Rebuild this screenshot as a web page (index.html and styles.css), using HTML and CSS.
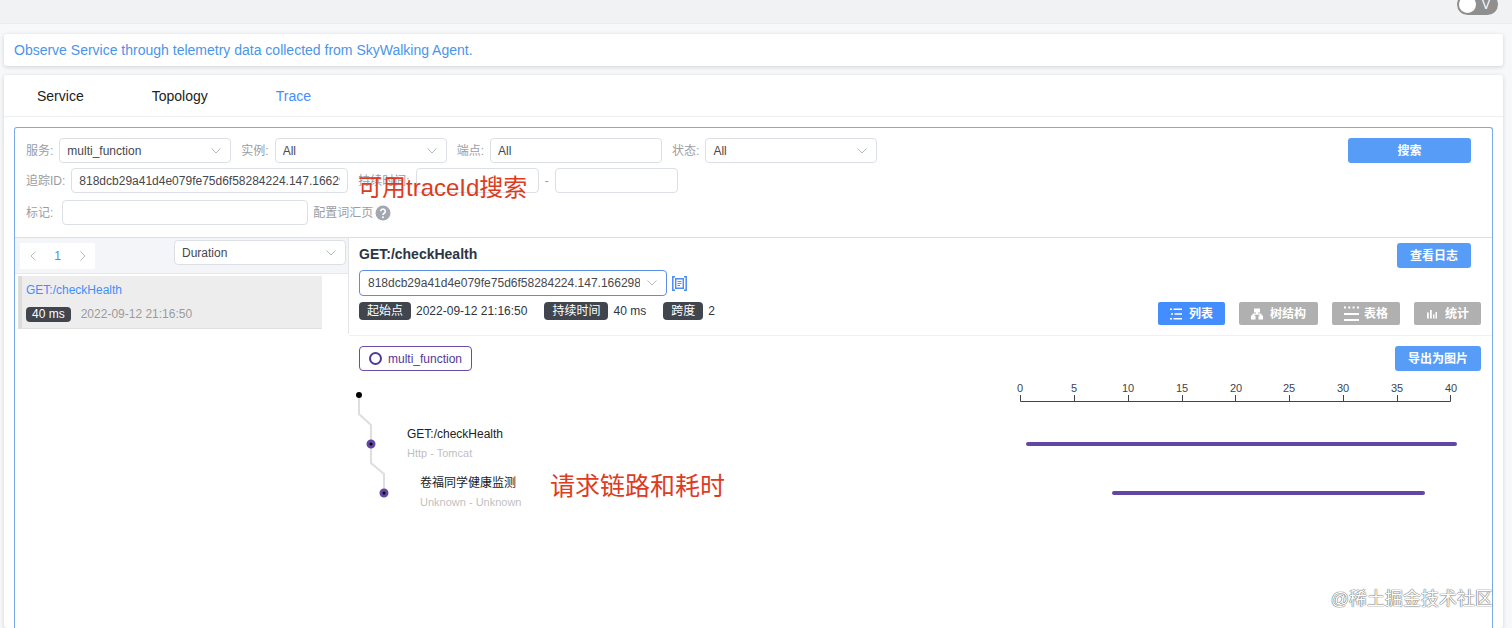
FILE: index.html
```html
<!DOCTYPE html>
<html lang="zh-CN">
<head>
    <meta charset="UTF-8">
    <meta name="viewport" content="width=device-width, initial-scale=1.0">
    <title>SkyWalking - Trace</title>
    <link rel="stylesheet" href="styles.css">
</head>
<body>
    <header class="topbar">
        <label class="switch">
            <input type="checkbox" aria-label="View mode">
            <span class="switch-text">V</span>
        </label>
    </header>

    <main class="page">
        <section class="card notice">
            <a href="#">Observe Service through telemetry data collected from SkyWalking Agent.</a>
        </section>

        <section class="card content">
            <nav class="tabs">
                <button type="button">Service</button>
                <button type="button">Topology</button>
                <button type="button" class="active">Trace</button>
            </nav>

            <div class="trace-panel">
                <form class="filters">
                    <div class="filter-row">
                        <div class="field">
                            <label for="service">服务:</label>
                            <select id="service" class="control medium"><option>multi_function</option></select>
                        </div>
                        <div class="field">
                            <label for="instance">实例:</label>
                            <select id="instance" class="control medium"><option>All</option></select>
                        </div>
                        <div class="field">
                            <label for="endpoint">端点:</label>
                            <input id="endpoint" class="control medium" type="text" value="All">
                        </div>
                        <div class="field">
                            <label for="status">状态:</label>
                            <select id="status" class="control medium"><option>All</option></select>
                        </div>
                        <button type="button" class="btn search">搜索</button>
                    </div>
                    <div class="filter-row">
                        <div class="field">
                            <label for="traceId">追踪ID:</label>
                            <input id="traceId" class="control trace-id" type="text" value="818dcb29a41d4e079fe75d6f58284224.147.16629886105550001">
                        </div>
                        <div class="field">
                            <label for="minTime">持续时间:</label>
                            <input id="minTime" class="control small" type="text">
                            <span class="dash">-</span>
                            <input class="control small" type="text" aria-label="最大持续时间">
                        </div>
                    </div>
                    <div class="filter-row tags-row">
                        <div class="field">
                            <label for="tags">标记:</label>
                            <input id="tags" class="control tags" type="text">
                        </div>
                        <a href="#" class="vocabulary">配置词汇页
                            <svg width="16" height="16" viewBox="0 0 16 16">
                                <circle cx="8" cy="8" r="7.5" fill="#a3a7b0"/>
                                <path d="M5.7 6.3a2.3 2.3 0 1 1 3.5 2c-.8.5-1.2.8-1.2 1.7" fill="none" stroke="#fff" stroke-width="1.6"/>
                                <circle cx="8" cy="12.2" r="1" fill="#fff"/>
                            </svg>
                        </a>
                    </div>
                    <p class="note note-search">可用traceId搜索</p>
                </form>

                <div class="trace-body">
                    <aside class="trace-list">
                        <div class="list-tools">
                            <div class="pager">
                                <button type="button" aria-label="Previous page">
                                    <svg width="8" height="12" viewBox="0 0 8 12"><path d="M6.5 1.5 2 6l4.500 4.500"/></svg>
                                </button>
                                <button type="button" class="current">1</button>
                                <button type="button" aria-label="Next page">
                                    <svg width="8" height="12" viewBox="0 0 8 12"><path d="M1.500 1.500 6 6l-4.500 4.500"/></svg>
                                </button>
                            </div>
                            <select class="control medium" aria-label="Order"><option>Duration</option></select>
                        </div>
                        <div class="trace-item">
                            <a href="#">GET:/checkHealth</a>
                            <div class="trace-meta">
                                <span class="tag">40 ms</span>
                                <span class="time">2022-09-12 21:16:50</span>
                            </div>
                        </div>
                    </aside>

                    <section class="trace-detail">
                        <div class="detail-head">
                            <div class="title-row">
                                <h2>GET:/checkHealth</h2>
                                <button type="button" class="btn">查看日志</button>
                            </div>
                            <div class="id-row">
                                <select class="control current-id" aria-label="Trace ID"><option>818dcb29a41d4e079fe75d6f58284224.147.16629886105550001</option></select>
                                <button type="button" class="copy" aria-label="Copy">
                                    <svg width="15" height="15" viewBox="0 0 15 15" fill="none" stroke="#4b8cf5">
                                        <path d="M3 .8H.8v13.400H3M12 .8h2.200v13.400H12" stroke-width="1.500"/>
                                        <path d="M3.700 2.700h7.600v9.600H3.700z" stroke-width="1.400"/>
                                        <path d="M5.500 5.500h4M5.500 7.500h4M5.500 9.500h2.500"/>
                                    </svg>
                                </button>
                            </div>
                            <div class="info-row">
                                <dl class="info">
                                    <div><dt class="tag">起始点</dt><dd>2022-09-12 21:16:50</dd></div>
                                    <div><dt class="tag">持续时间</dt><dd>40 ms</dd></div>
                                    <div><dt class="tag">跨度</dt><dd>2</dd></div>
                                </dl>
                                <div class="views">
                                    <button type="button" class="view active">
                                        <svg width="12" height="12" viewBox="0 0 12 12"><path d="M0 .5h2V2H0zM3.500.5H12V2H3.500zM1 5.200h2v1.500H1zM4.500 5.200H12v1.500H4.500zM0 10h2v1.500H0zM3.500 10H12v1.500H3.500z"/></svg>
                                        列表
                                    </button>
                                    <button type="button" class="view">
                                        <svg width="12" height="12" viewBox="0 0 12 12"><path d="M3 .5h6v4H7v1h3l1 2h1v4H7.500v-4h1.700l-.5-.8H3.300l-.5.800h1.700v4H0v-4h1l1-2h3v-1H3z"/></svg>
                                        树结构
                                    </button>
                                    <button type="button" class="view table-view">
                                        <svg width="15" height="15" viewBox="0 0 15 15"><path d="M0 .5h2v2H0zM4.300.5h2v2h-2zM8.600.5h2v2h-2zM13 .5h2v2h-2zM0 7h15v2H0zM0 13h15v2H0z"/></svg>
                                        表格
                                    </button>
                                    <button type="button" class="view">
                                        <svg width="12" height="12" viewBox="0 0 12 12"><path d="M1 4.500h1.800v6H1zM4 2h1.800v8.500H4zM7 6.500h1.500v4H7zM9.500 4h1.500v6.500H9.500z"/></svg>
                                        统计
                                    </button>
                                </div>
                            </div>
                        </div>

                        <div class="chart-head">
                            <div class="legend"><span class="ring"></span>multi_function</div>
                            <button type="button" class="btn">导出为图片</button>
                        </div>
                        <div class="chart">
                            <svg class="tree" width="200" height="140" viewBox="0 0 200 140">
                                <path class="link" d="M10 24v19l12 11v19M22 73v19l13 11v19"/>
                                <circle cx="10" cy="24" r="3"/>
                                <circle class="node" cx="22" cy="73" r="3"/>
                                <circle class="node" cx="35" cy="122" r="3"/>
                                <text class="name" x="58" y="67">GET:/checkHealth</text>
                                <text class="layer" x="58" y="86">Http - Tomcat</text>
                                <text class="name" x="71" y="116">卷福同学健康监测</text>
                                <text class="layer" x="71" y="135">Unknown - Unknown</text>
                            </svg>
                            <svg class="timeline" width="460" height="140" viewBox="0 0 460 140">
                                <path class="axis" d="M10.500 24v6.500h430V24M64.500 24v6M118.500 24v6M172.500 24v6M225.500 24v6M279.500 24v6M333.500 24v6M387.500 24v6"/>
                                <g class="ticks">
                                    <text x="10" y="21">0</text>
                                    <text x="64" y="21">5</text>
                                    <text x="118" y="21">10</text>
                                    <text x="172" y="21">15</text>
                                    <text x="226" y="21">20</text>
                                    <text x="279" y="21">25</text>
                                    <text x="333" y="21">30</text>
                                    <text x="387" y="21">35</text>
                                    <text x="441" y="21">40</text>
                                </g>
                                <rect class="span" x="16" y="71" width="431" height="4" rx="2"/>
                                <rect class="span" x="102" y="120" width="313" height="4" rx="2"/>
                            </svg>
                            <p class="note note-chart">请求链路和耗时</p>
                        </div>
                    </section>
                </div>
            </div>
        </section>
    </main>
    <div class="watermark">@稀土掘金技术社区</div>
</body>
</html>
```
FILE: styles.css
```css
* {
    box-sizing: border-box;
}
body {
    display: flex;
    flex-direction: column;
    min-height: 100vh;
    margin: 0;
    background: #f7f8fa;
    color: #2c3543;
    font-family: "Liberation Sans", "Noto Sans CJK SC", sans-serif;
    font-size: 12px;
    line-height: 16px;
}
button, input, select {
    font: inherit;
}
button {
    border: none;
    padding: 0;
    background: none;
    cursor: pointer;
}
a {
    color: #448dfe;
    text-decoration: none;
}
h2, p, dl, dd {
    margin: 0;
}

/* top bar */
.topbar {
    display: flex;
    justify-content: flex-end;
    height: 24px;
    padding-right: 14px;
    background: #f0f2f4;
    border-bottom: 1px solid #eaebed;
    overflow: hidden;
}
.switch {
    display: flex;
    align-items: center;
    gap: 6px;
    width: 41px;
    height: 21px;
    margin-top: -6px;
    padding: 0 2px;
    border-radius: 11px;
    background: #8f8f8f;
}
.switch input {
    flex: none;
    appearance: none;
    width: 17px;
    height: 17px;
    margin: 0;
    border-radius: 50%;
    background: #fff;
}
.switch-text {
    color: #fff;
    font-size: 12px;
}

/* cards */
.page {
    display: flex;
    flex: 1;
    flex-direction: column;
    gap: 9px;
    padding: 10px 9px 0 4px;
}
.card {
    background: #fff;
    border-radius: 3px;
    box-shadow: 0 1px 4px rgba(0, 0, 0, 0.16);
}
.notice {
    padding: 6px 10px;
    font-size: 14px;
    line-height: 20px;
}
.notice a {
    color: #4a95ea;
}
.content {
    display: flex;
    flex: 1;
    flex-direction: column;
}
.tabs {
    display: flex;
    gap: 68px;
    height: 42px;
    padding-left: 33px;
    border-bottom: 1px solid #eeeff1;
}
.tabs button {
    color: #222;
    font-size: 14px;
}
.tabs .active {
    color: #448dfe;
}
.trace-panel {
    flex: 1;
    margin: 10px 10px 0;
    border: 1px solid #79aaea;
    border-bottom: none;
    border-radius: 3px 3px 0 0;
}

/* filters */
.filters {
    position: relative;
    display: flex;
    flex-direction: column;
    gap: 5px;
    padding: 10px 21px 12px 11px;
    border-bottom: 1px solid #dcdfe3;
    color: #9a9da3;
}
.filter-row {
    display: flex;
    align-items: center;
    gap: 10px;
}
.tags-row {
    gap: 5px;
    margin-top: 2px;
}
.field {
    display: flex;
    align-items: center;
    gap: 6px;
}
.tags-row .field {
    gap: 9px;
}
.control {
    height: 25px;
    padding: 0 7px;
    border: 1px solid #dcdfe6;
    border-radius: 4px;
    background-color: #fff;
    color: #46484d;
}
select.control {
    appearance: none;
    padding: 0 26px 0 7px;
    background-image: url("data:image/svg+xml,%3Csvg xmlns='http://www.w3.org/2000/svg' width='12' height='8'%3E%3Cpath d='M1.500 1.500 6 6l4.500-4.500' fill='none' stroke='%23b4b8bf'/%3E%3C/svg%3E");
    background-repeat: no-repeat;
    background-position: right 8px center;
}
.medium {
    width: 172px;
}
.small {
    width: 123px;
}
.trace-id {
    width: 277px;
}
.tags {
    width: 246px;
}
.search {
    width: 123px;
    margin-left: auto;
}
.vocabulary {
    display: flex;
    align-items: center;
    gap: 2px;
    color: #9a9da3;
}
.btn {
    height: 25px;
    padding: 0 13px;
    border-radius: 3px;
    background: #579df8;
    color: #fff;
    font-weight: bold;
}

/* trace list */
.trace-body {
    display: flex;
    align-items: flex-start;
}
.trace-list {
    flex: none;
    width: 334px;
    height: 96px;
    border-right: 1px solid #e3e5e8;
}
.list-tools {
    display: flex;
    justify-content: space-between;
    align-items: flex-start;
    height: 36px;
    padding: 2px 2px 0 5px;
    background: #f3f5f9;
    border-bottom: 1px solid #e6e8ea;
}
.pager {
    display: flex;
    height: 26px;
    margin-top: 3px;
    background: #fff;
}
.pager button {
    width: 25px;
}
.pager svg {
    display: block;
    margin: auto;
    fill: none;
    stroke: #b4b8bf;
}
.pager .current {
    color: #448dfe;
}
.trace-item {
    margin: 2px 26px 0 3px;
    padding: 6px 4px;
    border-left: 4px solid #dcdcdc;
    background: #ededed;
    border-bottom: 1px solid #e0e0e0;
}
.trace-meta {
    display: flex;
    align-items: center;
    gap: 10px;
    margin-top: 8px;
    color: #9b9b9b;
}
.tag {
    padding: 0 6px;
    border-radius: 4px;
    background: #40454e;
    color: #fff;
}
.trace-item .tag {
    line-height: 15px;
}

/* trace detail */
.trace-detail {
    flex: 1;
    min-width: 0;
}
.detail-head {
    padding: 5px 11px 10px 10px;
    border-bottom: 1px solid #f0f0f0;
}
.title-row {
    display: flex;
    justify-content: space-between;
    padding-right: 10px;
}
.title-row h2 {
    font-size: 14px;
    line-height: 22px;
}
.id-row {
    display: flex;
    align-items: center;
    gap: 5px;
    margin-top: 2px;
}
.current-id {
    width: 308px;
    height: 26px;
    border-color: #5b8fe6;
}
select.current-id {
    padding-left: 8px;
}
.copy svg {
    display: block;
}
.info-row {
    display: flex;
    align-items: flex-start;
    justify-content: space-between;
    padding-top: 6px;
}
.info, .info div {
    display: flex;
}
.info {
    gap: 17px;
}
.info div {
    gap: 5px;
    line-height: 18px;
}
.info .tag {
    padding: 0 8px;
}
.views {
    display: flex;
    gap: 14px;
}
.view {
    display: flex;
    align-items: center;
    gap: 7px;
    height: 23px;
    padding: 0 12px;
    border-radius: 2px;
    background: #b0b0b0;
    color: #fff;
    font-weight: bold;
}
.view svg {
    fill: #fff;
}
.view.active {
    background: #448dfe;
}
.table-view {
    gap: 5px;
}
.chart-head {
    display: flex;
    justify-content: space-between;
    padding: 10px 11px 0 10px;
}
.legend {
    display: flex;
    align-items: center;
    gap: 6px;
    height: 25px;
    padding: 0 9px;
    border: 1px solid #6a4ea3;
    border-radius: 4px;
    color: #52389a;
}
.ring {
    width: 13px;
    height: 13px;
    border: 2px solid #52389a;
    border-radius: 50%;
}
.chart {
    position: relative;
    display: flex;
    justify-content: space-between;
    padding-right: 22px;
}
.link {
    fill: none;
    stroke: #dedede;
    stroke-width: 2;
}
.node {
    stroke: #6246a3;
    stroke-width: 3;
}
.name {
    fill: #222;
}
.layer {
    fill: #bfbfbf;
    font-size: 11px;
}
.axis {
    fill: none;
    stroke: #3d4450;
}
.ticks {
    fill: #3d4450;
    font-size: 11px;
    text-anchor: middle;
}
.span {
    fill: #6246a3;
}

/* notes over the page */
.note {
    position: absolute;
    color: #dd3b22;
    line-height: 36px;
}
.note-search {
    left: 343px;
    top: 42px;
    font-size: 24px;
}
.note-chart {
    left: 201px;
    top: 97px;
    font-size: 25px;
}
.watermark {
    position: absolute;
    right: 19px;
    bottom: 15px;
    color: #fff;
    font-size: 18px;
    line-height: 28px;
    text-shadow: 0 0 1px #444, 0 0 1px #555;
}
```
